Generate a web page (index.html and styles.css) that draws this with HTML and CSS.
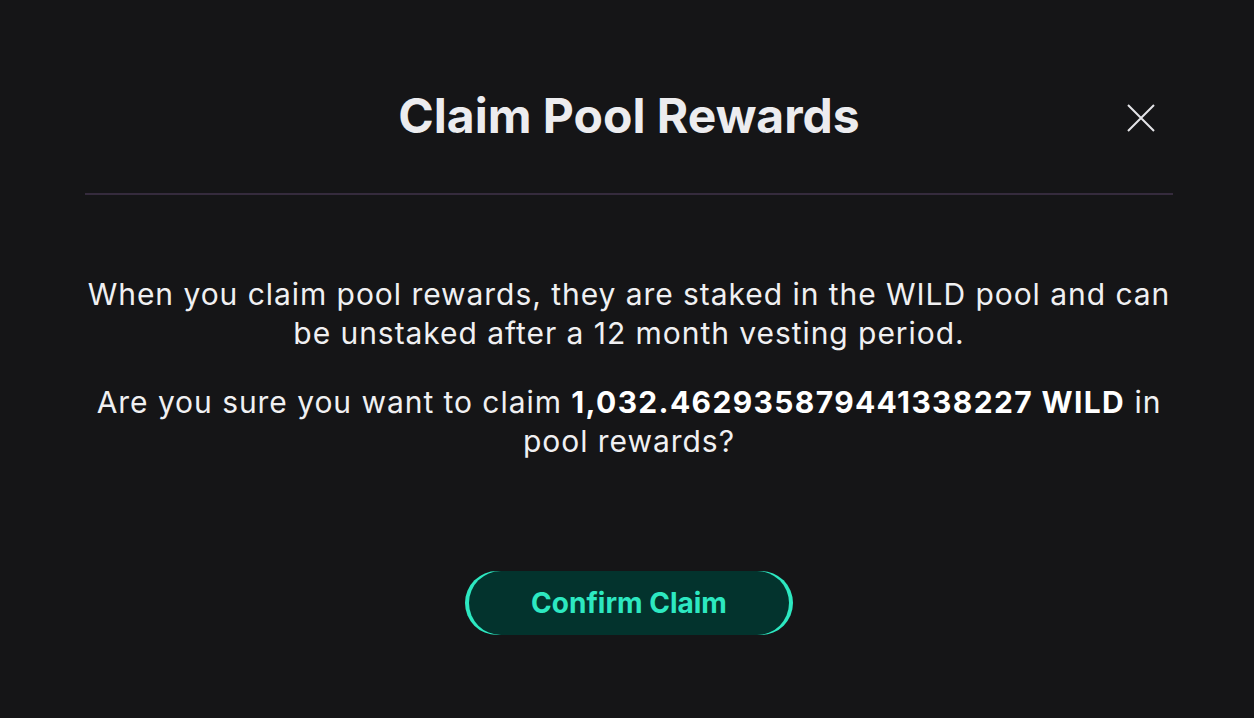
FILE: index.html
```html
<!DOCTYPE html>
<html lang="en">
<head>
    <meta charset="UTF-8">
    <meta name="viewport" content="width=device-width, initial-scale=1.0">
    <title>Claim Pool Rewards</title>
    <link rel="stylesheet" href="styles.css">
</head>
<body>

    <div class="modal">
        <div class="modal-header">
            <span></span>
            <h1 class="modal-title">Claim Pool Rewards</h1>
            <button class="close-button" aria-label="Close">
                <svg width="28" height="28" viewBox="0 0 28 28">
                    <path d="M1 1 L27 27 M27 1 L1 27" stroke="#e4e4e8" stroke-width="2" fill="none"/>
                </svg>
            </button>
        </div>

        <div class="divider"></div>

        <div class="modal-body">
            <p>When you claim pool rewards, they are staked in the WILD pool and can be unstaked after a 12 month vesting period.</p>
            <p>Are you sure you want to claim <b>1,032.462935879441338227 WILD</b> in pool rewards?</p>
        </div>

        <div class="modal-footer">
            <button class="confirm-button">Confirm Claim</button>
        </div>
    </div>

</body>
</html>
```

FILE: styles.css
```css
body{
    margin: 0;
    background-color: #151517;
    font-family: Inter, "Noto Sans", sans-serif;
    color: #f0f0f2;
}

.modal{
    width: 1088px;
    margin-left: 85px;
    padding-top: 87px;
}

.modal-header{
    display: grid;
    grid-template-columns: 1fr auto 1fr;
    align-items: center;
}

.modal-title{
    margin: 0;
    font-size: 48px;
    line-height: 58px;
    font-weight: 700;
    color: #ececef;
}

.close-button{
    justify-self: end;
    margin-right: 18px;
    margin-top: 4px;
    padding: 0;
    background: none;
    border: none;
    cursor: pointer;
    display: flex;
}

.divider{
    height: 2px;
    background-color: #352b3d;
    margin-top: 48px;
}

.modal-body{
    padding-top: 80px;
    text-align: center;
}
.modal-body p{
    margin: 0 0 30px 0;
    font-size: 30px;
    line-height: 39px;
    letter-spacing: 0.95px;
}
.modal-body p:last-child{
    margin-bottom: 0;
}
.modal-body b{
    font-weight: 700;
    color: #ffffff;
    letter-spacing: 1.35px;
}

.modal-footer{
    display: flex;
    justify-content: center;
    padding-top: 110px;
}

.confirm-button{
    width: 320px;
    height: 64px;
    border: none;
    border-radius: 32px;
    background-color: #03332d;
    box-shadow: -4px 0 0 #2de8c1, 4px 0 0 #2de8c1;
    color: #2de8c1;
    font-family: Inter, "Noto Sans", sans-serif;
    font-size: 28px;
    font-weight: 700;
    cursor: pointer;
}
```
